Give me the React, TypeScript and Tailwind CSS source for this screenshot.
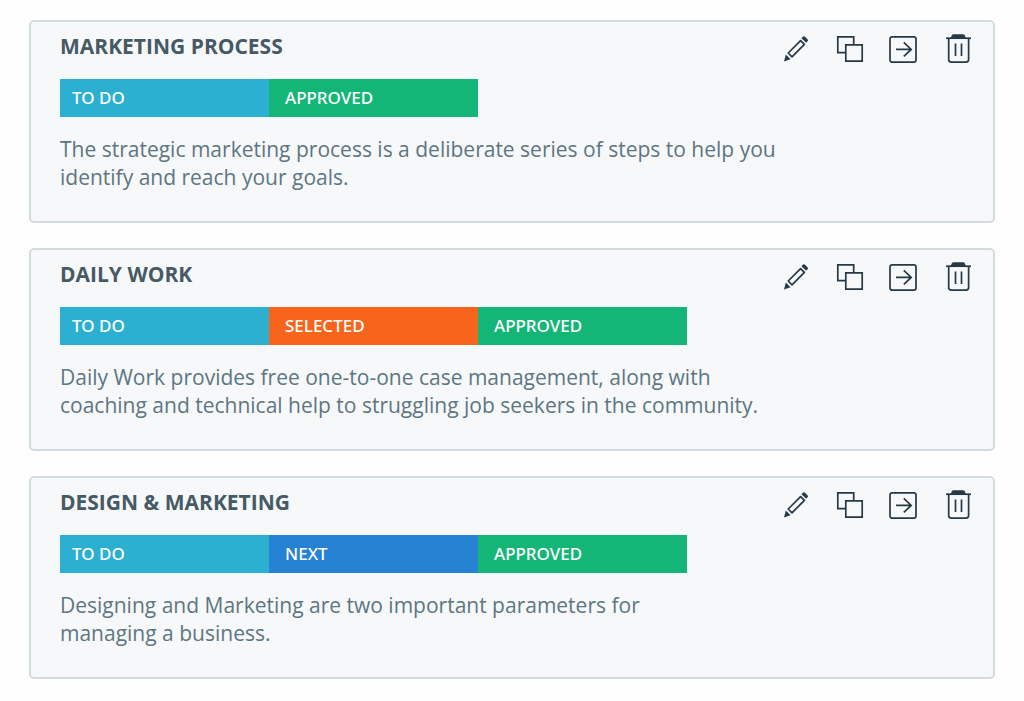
import type { ReactNode } from "react";

type Stage = { label: string; color: string };
type Process = { title: string; stages: Stage[]; description: string; measure: string };

const todo: Stage = { label: "TO DO", color: "bg-[#2bb0d1]" };
const selected: Stage = { label: "SELECTED", color: "bg-[#f7641b]" };
const next: Stage = { label: "NEXT", color: "bg-[#2682d3]" };
const approved: Stage = { label: "APPROVED", color: "bg-[#14b678]" };

const processes: Process[] = [
  {
    title: "MARKETING PROCESS",
    stages: [todo, approved],
    description:
      "The strategic marketing process is a deliberate series of steps to help you identify and reach your goals.",
    measure: "max-w-[720px]",
  },
  {
    title: "DAILY WORK",
    stages: [todo, selected, approved],
    description:
      "Daily Work provides free one-to-one case management, along with coaching and technical help to struggling job seekers in the community.",
    measure: "max-w-[720px]",
  },
  {
    title: "DESIGN & MARKETING",
    stages: [todo, next, approved],
    description:
      "Designing and Marketing are two important parameters for managing a business.",
    measure: "max-w-[600px]",
  },
];

function IconButton({ label, children }: { label: string; children: ReactNode }) {
  return (
    <button type="button" aria-label={label} className="size-8 shrink-0 cursor-pointer text-[#263944]">
      <svg viewBox="0 0 32 32" className="size-8" fill="none" stroke="currentColor" strokeWidth="1.7" aria-hidden="true">
        {children}
      </svg>
    </button>
  );
}

function Actions() {
  return (
    <div className="flex gap-[22px]">
      <IconButton label="Edit">
        <path d="M8.2 20 20.600 7.600l3.800 3.800L12 23.800Z" strokeLinejoin="round" />
        <path d="M21.400 5.200 23.200 3.500q.8-.6 1.500 0l3 3q.7.700 0 1.500L26.200 9.800Z" fill="currentColor" stroke="none" />
        <path d="M5.800 21.400 10.600 26.200 4 28.400Z" fill="currentColor" stroke="none" />
      </IconButton>
      <IconButton label="Duplicate">
        <path d="M11.500 19.700H3.800V3.800H19.700V11.500" />
        <path d="M11.800 11.800H28.200V28.200H11.800Z" />
      </IconButton>
      <IconButton label="Move">
        <rect x="2" y="3.800" width="26" height="25.400" rx="2.200" />
        <path d="M8 16.400H23.200M15.800 9.400l7.400 7-7.400 7" />
      </IconButton>
      <IconButton label="Delete">
        <path d="M4 5.200H29" />
        <path d="M8.800 5 9.700 2.600Q10.200 1.200 11.600 1.200H21Q22.400 1.200 22.900 2.600L23.800 5Z" fill="currentColor" stroke="none" />
        <path d="M6.700 5.500V26.600Q6.700 29.200 9.300 29.200H24Q26.600 29.200 26.600 26.600V5.500" />
        <path d="M13.500 10.500V23M19.500 10.500V23" />
      </IconButton>
    </div>
  );
}

function ProcessCard({ process }: { process: Process }) {
  return (
    <article className="rounded-[5px] border-2 border-[#d3dcdf] bg-[#f7f8fa] pr-[19px] pb-[30px] pl-[29px]">
      <header className="flex h-[57px] items-start justify-between">
        <h2 className="pt-2.5 text-[21px] leading-7 font-bold text-[#465a65]">{process.title}</h2>
        <div className="pt-[11px]">
          <Actions />
        </div>
      </header>
      <ol className="flex font-['Noto_Sans','Open_Sans',sans-serif]">
        {process.stages.map((stage, i) => (
          <li
            key={stage.label}
            className={`flex h-[38px] w-[209px] items-center text-[17px] font-medium text-white ${
              i === 0 ? "pl-3" : "pl-4"
            } ${stage.color}`}
          >
            {stage.label}
          </li>
        ))}
      </ol>
      <p className={`mt-[18px] text-[21px] leading-7 text-[#5d7681] ${process.measure}`}>{process.description}</p>
    </article>
  );
}

export default function App() {
  return (
    <main className="flex min-h-screen flex-col gap-[25px] bg-[#fefefe] px-[29px] py-5 font-['Open_Sans','Noto_Sans',sans-serif]">
      {processes.map((process) => (
        <ProcessCard key={process.title} process={process} />
      ))}
    </main>
  );
}
